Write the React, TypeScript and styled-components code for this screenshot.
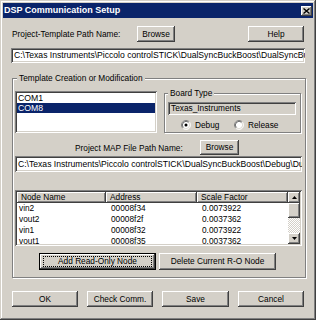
import React from 'react';
import styled, { createGlobalStyle, css } from 'styled-components';

const Global = createGlobalStyle`
  html, body { margin: 0; padding: 0; background: #d4d0c8; }
  body { font-family: "Liberation Sans", Arial, sans-serif; font-size: 8.3px; color: #000; }
  * { box-sizing: border-box; }
`;

const raised = css`
  box-shadow: inset -1px -1px #404040, inset 1px 1px #ffffff, inset -2px -2px #808080, inset 2px 2px #d4d0c8;
`;
const sunken = css`
  box-shadow: inset 1px 1px #808080, inset -1px -1px #ffffff, inset 2px 2px #404040, inset -2px -2px #d4d0c8;
`;

const Window = styled.div`
  width: 316px;
  height: 320px;
  background: #d4d0c8;
  padding: 3px;
  display: flex;
  flex-direction: column;
  box-shadow: inset -1px -1px #404040, inset 1px 1px #d4d0c8, inset -2px -2px #808080, inset 2px 2px #ffffff;
`;

const TitleBar = styled.div`
  height: 15px;
  background: #0a246a;
  display: flex;
  align-items: center;
  justify-content: space-between;
  padding: 0 1px 0 1px;
`;

const TitleText = styled.span`
  color: #fff;
  font-weight: bold;
  font-size: 9px;
  line-height: 15px;
  white-space: nowrap;
`;

const CloseBtn = styled.div`
  width: 11px;
  height: 10px;
  background: #d4d0c8;
  display: flex;
  align-items: center;
  justify-content: center;
  ${raised}
`;

const Body = styled.div`
  padding: 0 8px;
  display: flex;
  flex-direction: column;
`;

const Row = styled.div<{ $top: number; $h: number }>`
  display: flex;
  align-items: center;
  margin-top: ${p => p.$top}px;
  height: ${p => p.$h}px;
`;

const Label = styled.span<{ $w: number; $left?: number }>`
  width: ${p => p.$w}px;
  margin-left: ${p => p.$left ?? 0}px;
  white-space: nowrap;
`;

const Button = styled.div<{ $w: number; $h?: number; $left?: number; $auto?: boolean }>`
  width: ${p => p.$w}px;
  height: ${p => p.$h ?? 16}px;
  margin-left: ${p => (p.$auto ? 'auto' : `${p.$left ?? 0}px`)};
  flex: none;
  display: flex;
  align-items: center;
  justify-content: center;
  background: #d4d0c8;
  white-space: nowrap;
  padding-bottom: 1px;
  ${raised}
`;

const DefaultButton = styled(Button)`
  position: relative;
  box-shadow: inset 0 0 0 1px #000, inset -2px -2px #404040, inset 2px 2px #ffffff, inset -3px -3px #808080;
  &::after {
    content: '';
    position: absolute;
    inset: 3px 4px 3px 4px;
    border: 1px dotted #000;
  }
`;

const TextField = styled.div<{ $h: number; $top: number; $gray?: boolean; $w?: number; $fs?: number }>`
  height: ${p => p.$h}px;
  margin-top: ${p => p.$top}px;
  ${p => (p.$w ? `width: ${p.$w}px;` : '')}
  background: ${p => (p.$gray ? '#d4d0c8' : '#ffffff')};
  padding: 0 3px;
  font-size: ${p => p.$fs ?? 8.3}px;
  line-height: ${p => p.$h}px;
  white-space: nowrap;
  overflow: hidden;
  ${sunken}
`;

const Group = styled.div`
  position: relative;
  margin-top: 15px;
  margin-left: 1px;
  margin-right: -1px;
  border: 1px solid #808080;
  box-shadow: inset 1px 1px #ffffff, 1px 1px #ffffff;
  padding: 12px 3px 7px 2px;
  display: flex;
  flex-direction: column;
`;

const Legend = styled.span<{ $left: number }>`
  position: absolute;
  top: -6px;
  left: ${p => p.$left}px;
  padding: 0 2px;
  background: #d4d0c8;
  line-height: 11px;
  white-space: nowrap;
`;

const TopSection = styled.div`
  display: flex;
  height: 42px;
`;

const ListBox = styled.div`
  width: 142px;
  height: 42px;
  background: #fff;
  padding: 2px;
  font-size: 8.7px;
  ${sunken}
`;

const ListItem = styled.div<{ $sel?: boolean }>`
  height: 10px;
  line-height: 10px;
  padding-left: 1px;
  background: ${p => (p.$sel ? '#0a246a' : 'transparent')};
  color: ${p => (p.$sel ? '#fff' : '#000')};
`;

const BoardGroup = styled.div`
  position: relative;
  margin-left: 7px;
  margin-top: 2px;
  width: 137px;
  height: 40px;
  border: 1px solid #808080;
  box-shadow: inset 1px 1px #ffffff, 1px 1px #ffffff;
  padding: 8px 3px 0 3px;
  display: flex;
  flex-direction: column;
`;

const RadioRow = styled.div`
  display: flex;
  align-items: center;
  height: 11px;
  margin-top: 4px;
  padding-left: 13px;
`;

const RadioItem = styled.div<{ $w?: number }>`
  display: flex;
  align-items: center;
  gap: 4px;
  ${p => (p.$w ? `width: ${p.$w}px;` : '')}
`;

const Table = styled.div`
  margin-top: 18px;
  height: 56px;
  background: #fff;
  padding: 2px;
  display: flex;
  ${sunken}
`;

const TableMain = styled.div`
  flex: 1;
  display: flex;
  flex-direction: column;
  overflow: hidden;
`;

const HeaderRow = styled.div`
  display: flex;
  height: 11px;
  flex: none;
`;

const HeaderCell = styled.div<{ $w: number }>`
  width: ${p => p.$w}px;
  height: 11px;
  line-height: 10px;
  padding-left: 4px;
  background: #d4d0c8;
  white-space: nowrap;
  ${raised}
`;

const DataRow = styled.div`
  display: flex;
  height: 11px;
  flex: none;
  line-height: 11px;
`;

const DataCell = styled.div<{ $w: number; $pad: number }>`
  width: ${p => p.$w}px;
  padding-left: ${p => p.$pad}px;
  white-space: nowrap;
`;

const Scrollbar = styled.div`
  width: 12px;
  display: flex;
  flex-direction: column;
`;

const ScrollBtn = styled.div<{ $h: number }>`
  height: ${p => p.$h}px;
  flex: none;
  background: #d4d0c8;
  display: flex;
  align-items: center;
  justify-content: center;
  ${raised}
`;

const Track = styled.div`
  flex: 1;
  background: repeating-conic-gradient(#d4d0c8 0 25%, #ffffff 0 50%) 0 0 / 2px 2px;
`;

const ButtonRow = styled.div<{ $top: number; $h: number; $left: number; $gap: number }>`
  display: flex;
  margin-top: ${p => p.$top}px;
  height: ${p => p.$h}px;
  padding-left: ${p => p.$left}px;
  gap: ${p => p.$gap}px;
`;

const Radio: React.FC<{ checked?: boolean }> = ({ checked }) => (
  <svg width="10" height="10" viewBox="0 0 12 12">
    <circle cx="6" cy="6" r="5" fill="#fff" />
    <path d="M2.11 9.89 A5.5 5.5 0 0 1 9.89 2.11" stroke="#808080" fill="none" />
    <path d="M2.82 9.18 A4.5 4.5 0 0 1 9.18 2.82" stroke="#404040" fill="none" />
    <path d="M9.89 2.11 A5.5 5.5 0 0 1 2.11 9.89" stroke="#ffffff" fill="none" />
    <path d="M9.18 2.82 A4.5 4.5 0 0 1 2.82 9.18" stroke="#d4d0c8" fill="none" />
    {checked && <circle cx="6" cy="6" r="1.8" fill="#000" />}
  </svg>
);

const Arrow: React.FC<{ down?: boolean }> = ({ down }) => (
  <svg width="5" height="3" viewBox="0 0 5 3">
    <polygon points={down ? '0,0 5,0 2.5,3' : '0,3 5,3 2.5,0'} fill="#000" />
  </svg>
);

const rows = [
  ['vin2', '00008f34', '0.0073922'],
  ['vout2', '00008f2f', '0.0037362'],
  ['vin1', '00008f32', '0.0073922'],
  ['vout1', '00008f35', '0.0037362'],
];

export default function App() {
  return (
    <>
      <Global />
      <Window>
        <TitleBar>
          <TitleText>DSP Communication Setup</TitleText>
          <CloseBtn>
            <svg width="7" height="6" viewBox="0 0 7 6">
              <path d="M0.5 0.5 L6.5 5.5 M6.5 0.5 L0.5 5.5" stroke="#000" strokeWidth="1.4" />
            </svg>
          </CloseBtn>
        </TitleBar>
        <Body>
          <Row $top={8} $h={16}>
            <Label $w={125} $left={1}>Project-Template Path Name:</Label>
            <Button $w={38}>Browse</Button>
            <Button $w={56} $auto>Help</Button>
            <span style={{ width: 1 }} />
          </Row>
          <TextField $h={15} $top={6} $fs={8.6}>
            {'C:\\Texas Instruments\\Piccolo controlSTICK\\DualSyncBuckBoost\\DualSyncBuckBoost.xml'}
          </TextField>
          <Group>
            <Legend $left={4}>Template Creation or Modification</Legend>
            <TopSection>
              <ListBox>
                <ListItem>COM1</ListItem>
                <ListItem $sel>COM8</ListItem>
              </ListBox>
              <BoardGroup>
                <Legend $left={3}>Board Type</Legend>
                <TextField $h={13} $top={0} $w={128} $gray>Texas_Instruments</TextField>
                <RadioRow>
                  <RadioItem $w={53}>
                    <Radio checked />
                    <span>Debug</span>
                  </RadioItem>
                  <RadioItem>
                    <Radio />
                    <span>Release</span>
                  </RadioItem>
                </RadioRow>
              </BoardGroup>
            </TopSection>
            <Row $top={7} $h={15}>
              <Label $w={125} $left={60}>Project MAP File Path Name:</Label>
              <Button $w={39} $h={15}>Browse</Button>
            </Row>
            <TextField $h={16} $top={1} $fs={8.6}>
              {'C:\\Texas Instruments\\Piccolo controlSTICK\\DualSyncBuckBoost\\Debug\\DualSyncBuckBoost.map'}
            </TextField>
            <Table>
              <TableMain>
                <HeaderRow>
                  <HeaderCell $w={89}>Node Name</HeaderCell>
                  <HeaderCell $w={91}>Address</HeaderCell>
                  <HeaderCell $w={91}>Scale Factor</HeaderCell>
                </HeaderRow>
                {rows.map(r => (
                  <DataRow key={r[0]}>
                    <DataCell $w={89} $pad={2}>{r[0]}</DataCell>
                    <DataCell $w={91} $pad={5}>{r[1]}</DataCell>
                    <DataCell $w={91} $pad={5}>{r[2]}</DataCell>
                  </DataRow>
                ))}
              </TableMain>
              <Scrollbar>
                <ScrollBtn $h={11}><Arrow /></ScrollBtn>
                <ScrollBtn $h={15} />
                <Track />
                <ScrollBtn $h={11}><Arrow down /></ScrollBtn>
              </Scrollbar>
            </Table>
            <ButtonRow $top={7} $h={17} $left={24} $gap={3}>
              <DefaultButton $w={117} $h={17}>Add Read-Only Node</DefaultButton>
              <Button $w={117} $h={17}>Delete Current R-O Node</Button>
            </ButtonRow>
          </Group>
          <ButtonRow $top={13} $h={16} $left={1} $gap={9}>
            <Button $w={66}>OK</Button>
            <Button $w={66}>Check Comm.</Button>
            <Button $w={67}>Save</Button>
            <Button $w={66}>Cancel</Button>
          </ButtonRow>
        </Body>
      </Window>
    </>
  );
}
